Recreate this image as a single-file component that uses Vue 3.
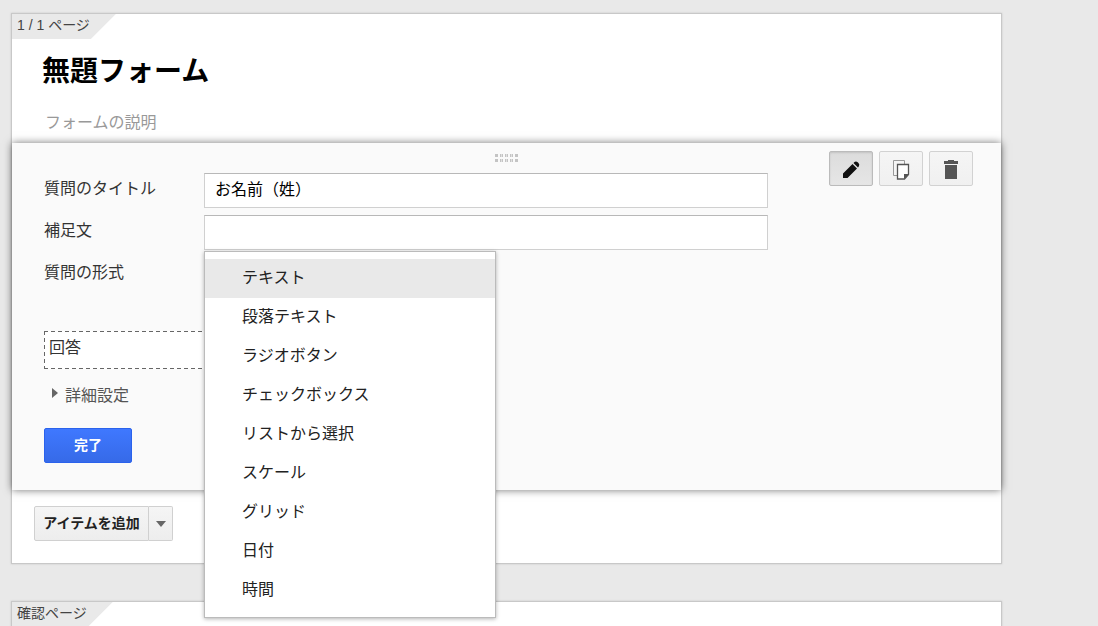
<script setup>
import { ref } from 'vue'

const description = ref('')
const title = ref('お名前（姓）')
const help = ref('')
const selected = ref('テキスト')
const types = [
  'テキスト',
  '段落テキスト',
  'ラジオボタン',
  'チェックボックス',
  'リストから選択',
  'スケール',
  'グリッド',
  '日付',
  '時間',
]
</script>

<template>
  <div class="page">
    <main class="card">
      <div class="tab">1 / 1 ページ</div>
      <header class="form-head">
        <h1>無題フォーム</h1>
        <input v-model="description" class="description" type="text" placeholder="フォームの説明" aria-label="フォームの説明" />
      </header>

      <section class="question">
        <svg class="grip" width="23" height="8" viewBox="0 0 23 8" aria-hidden="true">
          <g v-for="n in 5" :key="n" fill="#c4c4c4">
            <rect :x="(n - 1) * 5" y="0" width="3" height="3" />
            <rect :x="(n - 1) * 5" y="5" width="3" height="3" />
          </g>
          <g fill="#e0e0e0">
            <rect v-for="n in 3" :key="n" :x="n * 5 + 1" y="0" width="1" height="3" />
            <rect v-for="n in 3" :key="n + 3" :x="n * 5 + 1" y="5" width="1" height="3" />
          </g>
        </svg>

        <div class="tools">
          <button type="button" class="tool active" aria-label="編集">
            <svg width="18" height="18" viewBox="0 0 18 18">
              <path fill="#111" d="M1 17v-4.500L10.500 3l4.500 4.500L5.500 17zM11.500 2l1-1q1.500-1 3.500 .5t1 3.500L16 6.500z" />
            </svg>
          </button>
          <button type="button" class="tool" aria-label="コピー">
            <svg width="18" height="20" viewBox="0 0 18 20">
              <path fill="#f5f5f5" stroke="#999" d="M1.500.5h11v15h-11z" />
              <path fill="#fff" stroke="#555" stroke-width="1.300" d="M5.500 4.500h11v10l-4 4.500h-7z" />
              <path fill="#555" d="M12 19v-5h5z" />
            </svg>
          </button>
          <button type="button" class="tool" aria-label="削除">
            <svg width="16" height="19" viewBox="0 0 16 19">
              <path fill="#555" d="M1 1h4V0h6v1h4v3H1zM2 5h12v14H2z" />
            </svg>
          </button>
        </div>

        <div class="fields">
          <label for="q-title">質問のタイトル</label>
          <input id="q-title" v-model="title" type="text" />
          <label for="q-help">補足文</label>
          <input id="q-help" v-model="help" type="text" />
          <span id="q-type" class="label">質問の形式</span>
          <div class="type">
            <ul class="menu" role="listbox" aria-labelledby="q-type">
              <li v-for="t in types" :key="t" role="presentation">
                <button type="button" role="option" :aria-selected="selected === t" :class="{ current: selected === t }" @click="selected = t">{{ t }}</button>
              </li>
            </ul>
          </div>
        </div>

        <div class="answer">回答</div>
        <button type="button" class="advanced">
          <svg width="6" height="10" viewBox="0 0 6 10" aria-hidden="true"><path fill="#666" d="M0 0l6 5-6 5z" /></svg>
          詳細設定
        </button>
        <button type="button" class="done">完了</button>
      </section>

      <footer class="add">
        <button type="button" class="add-item">アイテムを追加</button>
        <button type="button" class="add-more" aria-label="アイテムの種類">
          <svg width="10" height="6" viewBox="0 0 10 6"><path fill="#666" d="M0 0h10L5 6z" /></svg>
        </button>
      </footer>
    </main>

    <section class="card next">
      <div class="tab">確認ページ</div>
    </section>
  </div>
</template>

<style>
body {
  margin: 0;
  background: #e9e9e9;
}
</style>

<style scoped>
.page,
.page * {
  box-sizing: border-box;
}
.page {
  display: flex;
  flex-direction: column;
  gap: 37px;
  height: 100vh;
  overflow: hidden;
  padding: 13px 96px 0 11px;
  font-family: "Liberation Sans", "Noto Sans CJK JP", sans-serif;
  font-size: 16px;
  color: #333;
}
button,
input {
  font: inherit;
  color: inherit;
  margin: 0;
}
.card {
  flex: none;
  border: 1px solid #c8c8c8;
  background: #fff;
  box-shadow: 0 0 2px rgba(0, 0, 0, 0.15);
}
.next {
  flex: 1 0 24px;
  border-bottom: 0;
}
.tab {
  width: fit-content;
  height: 25px;
  padding: 0 26px 0 5px;
  background: #e9e9e9;
  clip-path: polygon(0 0, 100% 0, calc(100% - 25px) 100%, 0 100%);
  font-size: 14px;
  line-height: 22px;
  color: #444;
}
.form-head {
  padding: 13px 30px 8px;
}
h1 {
  margin: 0;
  font-size: 28px;
  line-height: 40px;
  color: #000;
}
.description {
  display: block;
  width: 100%;
  height: 24px;
  margin-top: 19px;
  padding: 0 3px;
  border: 0;
  outline: 0;
  background: transparent;
}
.description::placeholder {
  color: #999;
  opacity: 1;
}
.question {
  position: relative;
  padding: 30px 32px 27px;
  background: #fafafa;
  box-shadow: 0 0 8px rgba(0, 0, 0, 0.55);
}
.grip {
  position: absolute;
  top: 11px;
  left: 50%;
  margin-left: -12px;
}
.tools {
  position: absolute;
  top: 8px;
  right: 28px;
  display: flex;
  gap: 6px;
}
.tool {
  display: flex;
  align-items: center;
  justify-content: center;
  width: 44px;
  height: 35px;
  padding: 2px 0 0;
  border: 1px solid #d2d2d2;
  border-radius: 2px;
  background: linear-gradient(#f5f5f5, #f0f0f0);
}
.tool.active {
  border-color: #bbb;
  background: linear-gradient(#dcdcdc, #e6e6e6);
  box-shadow: inset 0 1px 2px rgba(0, 0, 0, 0.12);
}
.fields {
  display: grid;
  grid-template-columns: 160px minmax(0, 564px);
  row-gap: 7px;
}
.fields label,
.fields .label {
  height: 31px;
  line-height: 32px;
}
.fields input {
  width: 100%;
  height: 35px;
  padding: 0 11px 6px 10px;
  border: 1px solid #d0d0d0;
  border-top-color: #b8b8b8;
  outline: 0;
  background: #fff;
  color: #000;
}
.type {
  position: relative;
}
.menu {
  position: absolute;
  z-index: 2;
  top: -6px;
  left: 0;
  width: 292px;
  margin: 0;
  padding: 7px 0;
  list-style: none;
  border: 1px solid #bbb;
  background: #fff;
  box-shadow: 0 1px 4px rgba(0, 0, 0, 0.3);
}
.menu button {
  display: block;
  width: 100%;
  height: 39px;
  padding: 0 37px 6px;
  border: 0;
  background: transparent;
  text-align: left;
  color: #222;
}
.menu .current {
  background: #e9e9e9;
}
.answer {
  width: 320px;
  height: 38px;
  margin-top: 43px;
  padding-left: 5px;
  line-height: 34px;
  background:
    repeating-linear-gradient(90deg, #666 0 4px, transparent 4px 7px) top / 100% 1px no-repeat,
    repeating-linear-gradient(90deg, #666 0 4px, transparent 4px 7px) bottom / 100% 1px no-repeat,
    repeating-linear-gradient(#666 0 4px, transparent 4px 7px) left / 1px 100% no-repeat,
    repeating-linear-gradient(#666 0 4px, transparent 4px 7px) right / 1px 100% no-repeat,
    #fff;
}
.advanced {
  display: flex;
  align-items: center;
  gap: 7px;
  height: 24px;
  margin-top: 13px;
  padding: 0 0 0 8px;
  border: 0;
  background: transparent;
  color: #555;
}
.advanced svg {
  margin-bottom: 2px;
}
.done {
  display: block;
  width: 88px;
  height: 35px;
  margin-top: 22px;
  padding: 0 0 3px;
  border: 1px solid #2a62ec;
  border-radius: 2px;
  background: linear-gradient(#3f78ff, #366ae8);
  color: #fff;
  font-size: 14px;
  font-weight: bold;
}
.add {
  display: flex;
  padding: 16px 22px 22px;
}
.add button {
  height: 35px;
  padding: 0 0 3px;
  border: 1px solid #d0d0d0;
  background: linear-gradient(#f5f5f5, #ededed);
  font-size: 14px;
  font-weight: bold;
}
.add .add-item {
  width: 115px;
  border-radius: 2px 0 0 2px;
  color: #222;
}
.add .add-more {
  display: flex;
  align-items: center;
  justify-content: center;
  width: 24px;
  padding: 0;
  border-left: 0;
  border-radius: 0 2px 2px 0;
}
</style>
